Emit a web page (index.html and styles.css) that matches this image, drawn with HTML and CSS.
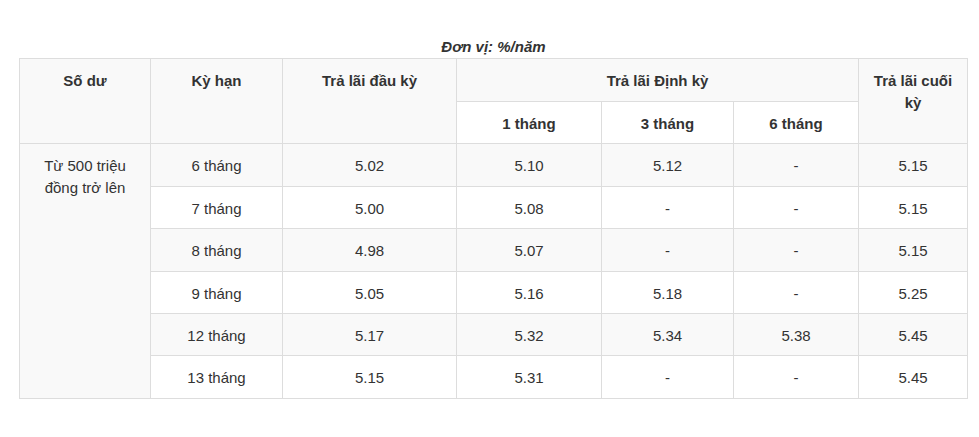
FILE: index.html
```html
<!DOCTYPE html>
<html lang="vi">
<head>
<meta charset="utf-8">
<title>Lãi suất</title>
<link rel="stylesheet" href="styles.css">
</head>
<body>
<div class="wrap">
<table class="rates">
<caption>Đơn vị: %/năm</caption>
<colgroup>
<col class="c1"><col class="c2"><col class="c3"><col class="c4"><col class="c5"><col class="c6"><col class="c7">
</colgroup>
<thead>
<tr>
<th rowspan="2">Số dư</th>
<th rowspan="2">Kỳ hạn</th>
<th rowspan="2">Trả lãi đầu kỳ</th>
<th colspan="3">Trả lãi Định kỳ</th>
<th rowspan="2">Trả lãi cuối kỳ</th>
</tr>
<tr>
<th>1 tháng</th>
<th>3 tháng</th>
<th>6 tháng</th>
</tr>
</thead>
<tbody>
<tr><td rowspan="6">Từ 500 triệu đồng trở lên</td><td>6 tháng</td><td>5.02</td><td>5.10</td><td>5.12</td><td>-</td><td>5.15</td></tr>
<tr><td>7 tháng</td><td>5.00</td><td>5.08</td><td>-</td><td>-</td><td>5.15</td></tr>
<tr><td>8 tháng</td><td>4.98</td><td>5.07</td><td>-</td><td>-</td><td>5.15</td></tr>
<tr><td>9 tháng</td><td>5.05</td><td>5.16</td><td>5.18</td><td>-</td><td>5.25</td></tr>
<tr><td>12 tháng</td><td>5.17</td><td>5.32</td><td>5.34</td><td>5.38</td><td>5.45</td></tr>
<tr><td>13 tháng</td><td>5.15</td><td>5.31</td><td>-</td><td>-</td><td>5.45</td></tr>
</tbody>
</table>
</div>
</body>
</html>
```
FILE: styles.css
```css
html, body {
  margin: 0;
  padding: 0;
  background: #fff;
}
body {
  font-family: "Liberation Sans", Arial, sans-serif;
  font-size: 15px;
  line-height: 1.428571;
  color: #333;
}
.wrap {
  padding: 27px 0 0 19px;
}
.rates {
  border-collapse: collapse;
  table-layout: fixed;
  width: 948px;
}
.rates caption {
  font-weight: bold;
  font-style: italic;
  text-align: center;
  padding: 9px 0 1px;
  color: #333;
}
.c1 { width: 131px; }
.c2 { width: 132px; }
.c3 { width: 174px; }
.c4 { width: 145px; }
.c5 { width: 132px; }
.c6 { width: 125px; }
.c7 { width: 109px; }
.rates th,
.rates td {
  border: 1px solid #ddd;
  padding: 11px 10px 9px;
  text-align: center;
  vertical-align: top;
}
.rates th {
  font-weight: bold;
}
.rates thead tr:nth-child(odd),
.rates tbody tr:nth-child(odd) {
  background: #f9f9f9;
}
```
